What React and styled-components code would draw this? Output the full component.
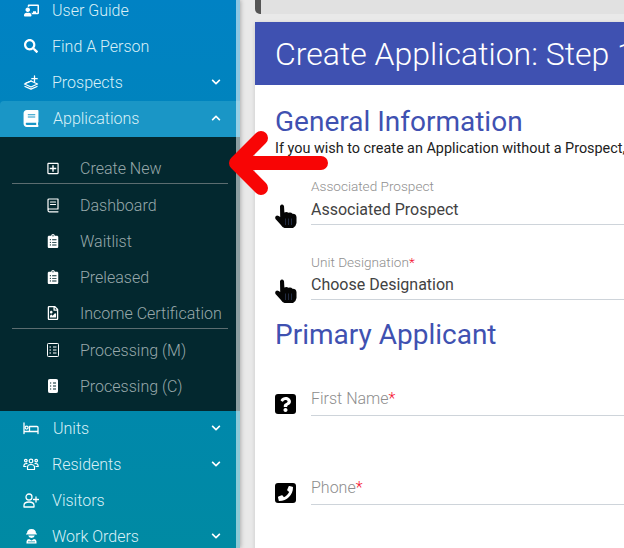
import React from "react";
import styled, { createGlobalStyle } from "styled-components";
import {
  FaChalkboardTeacher,
  FaSearch,
  FaBook,
  FaChevronDown,
  FaChevronUp,
  FaRegPlusSquare,
  FaClipboardList,
  FaRegFileImage,
  FaQuestion,
  FaPhone,
} from "react-icons/fa";

const Global = createGlobalStyle`
  * { box-sizing: border-box; }
  html, body { margin: 0; padding: 0; height: 100%; overflow: hidden; }
  body { font-family: Roboto, "Liberation Sans", sans-serif; background: #e9e9e9; }
`;

const Page = styled.div`
  display: flex;
  width: 624px;
  height: 548px;
  overflow: hidden;
  position: relative;
`;

const Sidebar = styled.aside`
  flex: 0 0 240px;
  height: 548px;
  overflow: hidden;
  position: relative;
  background: linear-gradient(180deg, #0082c4 0%, #008aa3 100%);
  box-shadow: 1px 0 4px rgba(0, 0, 0, 0.25);

  &::after {
    content: "";
    position: absolute;
    top: 0;
    right: 0;
    bottom: 0;
    width: 4px;
    background: rgba(255, 255, 255, 0.55);
  }
`;

const Menu = styled.nav`
  margin-top: -8px;
`;

const Row = styled.div`
  display: flex;
  align-items: center;
  height: 36px;
  padding: 0 19px ${(p) => (p.$lift ? "2px" : "0")} 23px;
  color: #d9f0f7;
  font-size: 16px;
  font-weight: 300;
  background: ${(p) => (p.$open ? "#1a96c6" : "transparent")};
  border-radius: ${(p) => (p.$open ? "4px 0 0 0" : "0")};
  margin-top: ${(p) => (p.$open ? "1px" : "0")};
`;

const RowIcon = styled.span`
  display: flex;
  justify-content: center;
  width: 16px;
  margin-right: ${(p) => p.$gap || 13}px;
  color: #fff;
  font-size: ${(p) => p.$size || 14}px;
`;

const RowLabel = styled.span`
  flex: 1;
`;

const Chevron = styled.span`
  display: flex;
  color: #fff;
  font-size: 10px;
`;

const SubMenu = styled.div`
  background: #03282f;
  padding: 15px 12px 7px 12px;
`;

const SubRow = styled.div`
  display: flex;
  align-items: center;
  height: ${(p) => p.$height || 36}px;
  padding-left: 35px;
  padding-top: ${(p) => p.$shift || 0}px;
  color: #98a8ab;
  font-size: 16px;
  font-weight: 300;
  white-space: nowrap;
  border-bottom: ${(p) => (p.$height ? "1px solid #5c6d70" : "none")};
  margin-bottom: ${(p) => (p.$height ? "3px" : "0")};
`;

const SubIcon = styled.span`
  display: flex;
  justify-content: center;
  width: 12px;
  margin-right: 21px;
  color: #fff;
  font-size: ${(p) => p.$size || 13}px;
`;

const Main = styled.main`
  flex: 1;
  min-width: 0;
  padding-left: 15px;
`;

const TopBar = styled.div`
  height: 14px;
  background: #e1e1e1;
  border-left: 6px solid #555;
  border-bottom-left-radius: 5px;
  margin-bottom: 8px;
`;

const Card = styled.section`
  background: #fff;
  height: 600px;
  border-top-left-radius: 3px;
  box-shadow: 0 1px 4px rgba(0, 0, 0, 0.14);
`;

const CardHead = styled.header`
  background: #3f51b1;
  height: 63px;
  padding-left: 20px;
  display: flex;
  align-items: center;
  white-space: nowrap;
  color: #fff;
  font-size: 32px;
  font-weight: 300;
`;

const CardBody = styled.div`
  padding: 20px 0 0 20px;
  white-space: nowrap;
`;

const SectionTitle = styled.h2`
  margin: ${(p) => p.$before || 0}px 0 0;
  color: #3f51b1;
  font-size: 28px;
  font-weight: 400;
  line-height: 34px;
`;

const Intro = styled.p`
  margin: 0 0 19px;
  color: #212121;
  font-size: 14.4px;
  line-height: 20px;
`;

const Field = styled.div`
  display: flex;
  align-items: flex-end;
  margin-top: ${(p) => p.$before || 0}px;
`;

const FieldIcon = styled.span`
  display: flex;
  flex: 0 0 36px;
  margin-bottom: ${(p) => p.$drop}px;
`;

const Control = styled.div`
  flex: 1;
  border-bottom: 1px solid #ced4da;
`;

const SmallLabel = styled.label`
  display: block;
  color: #8f8f8f;
  font-size: 13.6px;
  line-height: 16px;
  font-weight: 300;
`;

const Value = styled.div`
  color: #424242;
  font-size: 16px;
  height: 29px;
  line-height: 30px;
  margin-top: ${(p) => p.$top || 0}px;
`;

const Placeholder = styled.div`
  color: #8d8d8d;
  font-size: 16px;
  font-weight: 300;
  height: 33px;
  line-height: 34px;
`;

const Req = styled.span`
  color: #f5102f;
`;

const IconTile = styled.span`
  display: flex;
  align-items: center;
  justify-content: center;
  width: 21px;
  height: 20px;
  background: #000;
  border-radius: 3px;
  color: #fff;
  font-size: 15px;
`;

const Arrow = styled.svg`
  position: absolute;
  left: 227px;
  top: 125px;
  width: 105px;
  height: 76px;
`;

// line icons the packages don't have in this shape
const Line = ({ w = 16, h = 16, box = "0 0 16 16", sw = 1.3, children }) => (
  <svg width={w} height={h} viewBox={box} fill="none" stroke="currentColor" strokeWidth={sw} strokeLinecap="round" strokeLinejoin="round">
    {children}
  </svg>
);

const ProspectIcon = () => (
  <Line>
    <path d="M1.5 10 L8 7 L14.5 10 L8 13 Z" />
    <path d="M2 12.5 L8 15.2 L14 12.5" />
    <path d="M8 7 L3 9" />
    <path d="M11.5 2 V7.5 M8.8 4.7 H14.2" />
  </Line>
);

const BedIcon = () => (
  <Line h={14} box="0 0 16 14">
    <path d="M1 2 V12.5 M1 10.5 H15 V12.5 M15 10.5 V6.5 Q15 5.5 14 5.5 H6.5 V10.5" />
    <circle cx="3.6" cy="6.6" r="1.5" />
  </Line>
);

const ResidentsIcon = () => (
  <Line h={14} box="0 0 16 14" sw={1.2}>
    <circle cx="8" cy="4" r="1.8" />
    <circle cx="2.8" cy="3.6" r="1.3" />
    <circle cx="13.2" cy="3.6" r="1.3" />
    <path d="M4.5 12.5 V10.5 Q4.5 7.5 8 7.5 Q11.5 7.5 11.5 10.5 V12.5 Z" />
    <path d="M4 6.6 Q1 6 0.8 9.5 H3 M12 6.6 Q15 6 15.2 9.5 H13" />
  </Line>
);

const VisitorIcon = () => (
  <Line h={15} box="0 0 16 15" sw={1.3}>
    <circle cx="6" cy="4" r="3" />
    <path d="M1 14 V12.5 Q1 9 6 9 Q11 9 11 12.5 V14 Z" />
    <path d="M13 4 V9 M10.5 6.5 H15.5" />
  </Line>
);

const WorkerIcon = () => (
  <svg width="13" height="16" viewBox="0 0 13 16" fill="currentColor">
    <path d="M2 5.5 Q2 1 6.5 1 Q11 1 11 5.5 H12 V6.6 H1 V5.5 Z" />
    <path d="M3.2 7.6 H9.8 Q9.4 10 6.5 10 Q3.6 10 3.2 7.6 Z" />
    <path d="M1.5 15.5 V13.5 Q1.5 11.2 4 11 L6.5 12.6 L9 11 Q11.5 11.2 11.5 13.5 V15.5 Z M3 14.2 H10 V13.4 H3 Z" fillRule="evenodd" />
  </svg>
);

const NotebookIcon = () => (
  <Line w={12} h={15} box="0 0 12 15" sw={1.2}>
    <path d="M1 12 V2 Q1 1 2 1 H11 V11 H2 Q1 11 1 12 Q1 13.8 2.2 13.8 H11" />
    <path d="M3.5 4 H8.5 M3.5 6.5 H8.5" />
  </Line>
);

const ChecklistIcon = ({ solid }) => (
  <svg width={solid ? 10 : 12} height="14" viewBox={solid ? "0 0 10 14" : "0 0 12 14"}>
    <rect x="0.5" y="0.5" width={solid ? 9 : 11} height="13" rx="0.8" fill={solid ? "#fff" : "none"} stroke="#fff" />
    <path
      d={solid ? "M2 4 H3.2 M5 4 H8 M2 7 H3.2 M5 7 H8 M2 10 H3.2 M5 10 H8" : "M2.5 4 H4 M6 4 H9.5 M2.5 7 H4 M6 7 H9.5 M2.5 10 H4 M6 10 H9.5"}
      stroke={solid ? "#03282f" : "#fff"}
      strokeWidth="1.1"
    />
  </svg>
);

const HandIcon = () => (
  <svg width="22" height="24" viewBox="0 0 22 24">
    <path d="M5 2 Q7 -0.8 9 2 L9.4 8.6 Q11.5 7.4 13.5 8.8 Q16 8 17.5 9.8 Q21 9.6 21.5 13 L21.5 19 Q21 22.5 18 24 L9.5 24 Q7 23 5.5 20.5 L0.5 15 Q-0.6 12 2 11.4 Q3.8 11.4 5.2 13 Z" fill="#050505" />
    <path d="M10.5 14.5 V21 M13.5 14.5 V21 M16.5 14.5 V21" stroke="#2a3550" strokeWidth="0.8" />
  </svg>
);

const App = () => {
  return (
    <Page>
      <Global />
      <Sidebar>
        <Menu>
          <Row><RowIcon $size={15}><FaChalkboardTeacher /></RowIcon><RowLabel>User Guide</RowLabel></Row>
          <Row><RowIcon><FaSearch /></RowIcon><RowLabel>Find A Person</RowLabel></Row>
          <Row><RowIcon><ProspectIcon /></RowIcon><RowLabel>Prospects</RowLabel><Chevron><FaChevronDown /></Chevron></Row>
          <Row $open $lift><RowIcon $gap={14} $size={17}><FaBook /></RowIcon><RowLabel>Applications</RowLabel><Chevron><FaChevronUp /></Chevron></Row>
          <SubMenu>
            <SubRow $height={32} $shift={1}><SubIcon><FaRegPlusSquare /></SubIcon>Create New</SubRow>
            <SubRow><SubIcon><NotebookIcon /></SubIcon>Dashboard</SubRow>
            <SubRow><SubIcon $size={14}><FaClipboardList /></SubIcon>Waitlist</SubRow>
            <SubRow><SubIcon $size={14}><FaClipboardList /></SubIcon>Preleased</SubRow>
            <SubRow $height={34} $shift={3}><SubIcon $size={14}><FaRegFileImage /></SubIcon>Income Certification</SubRow>
            <SubRow><SubIcon><ChecklistIcon /></SubIcon>Processing (M)</SubRow>
            <SubRow><SubIcon><ChecklistIcon solid /></SubIcon>Processing (C)</SubRow>
          </SubMenu>
          <Row $lift><RowIcon $gap={14}><BedIcon /></RowIcon><RowLabel>Units</RowLabel><Chevron><FaChevronDown /></Chevron></Row>
          <Row $lift><RowIcon><ResidentsIcon /></RowIcon><RowLabel>Residents</RowLabel><Chevron><FaChevronDown /></Chevron></Row>
          <Row $lift><RowIcon><VisitorIcon /></RowIcon><RowLabel>Visitors</RowLabel></Row>
          <Row $lift><RowIcon><WorkerIcon /></RowIcon><RowLabel>Work Orders</RowLabel><Chevron><FaChevronDown /></Chevron></Row>
        </Menu>
      </Sidebar>
      <Main>
        <TopBar />
        <Card>
          <CardHead>Create Application: Step 1</CardHead>
          <CardBody>
            <SectionTitle>General Information</SectionTitle>
            <Intro>If you wish to create an Application without a Prospect,</Intro>
            <Field>
              <FieldIcon $drop={-3}><HandIcon /></FieldIcon>
              <Control>
                <SmallLabel>Associated Prospect</SmallLabel>
                <Value $top={1}>Associated Prospect</Value>
              </Control>
            </Field>
            <Field $before={29}>
              <FieldIcon $drop={-3}><HandIcon /></FieldIcon>
              <Control>
                <SmallLabel>Unit Designation<Req>*</Req></SmallLabel>
                <Value>Choose Designation</Value>
              </Control>
            </Field>
            <SectionTitle $before={18}>Primary Applicant</SectionTitle>
            <Field $before={30}>
              <FieldIcon $drop={2}><IconTile><FaQuestion /></IconTile></FieldIcon>
              <Control><Placeholder>First Name<Req>*</Req></Placeholder></Control>
            </Field>
            <Field $before={55}>
              <FieldIcon $drop={2}><IconTile><FaPhone /></IconTile></FieldIcon>
              <Control><Placeholder>Phone<Req>*</Req></Placeholder></Control>
            </Field>
          </CardBody>
        </Card>
      </Main>
      <Arrow viewBox="0 0 105 76">
        <path d="M34 13 L9 38 L34 63 M9 38 H94" fill="none" stroke="#f80505" strokeWidth="14" strokeLinecap="round" strokeLinejoin="round" />
      </Arrow>
    </Page>
  );
};

export default App;
